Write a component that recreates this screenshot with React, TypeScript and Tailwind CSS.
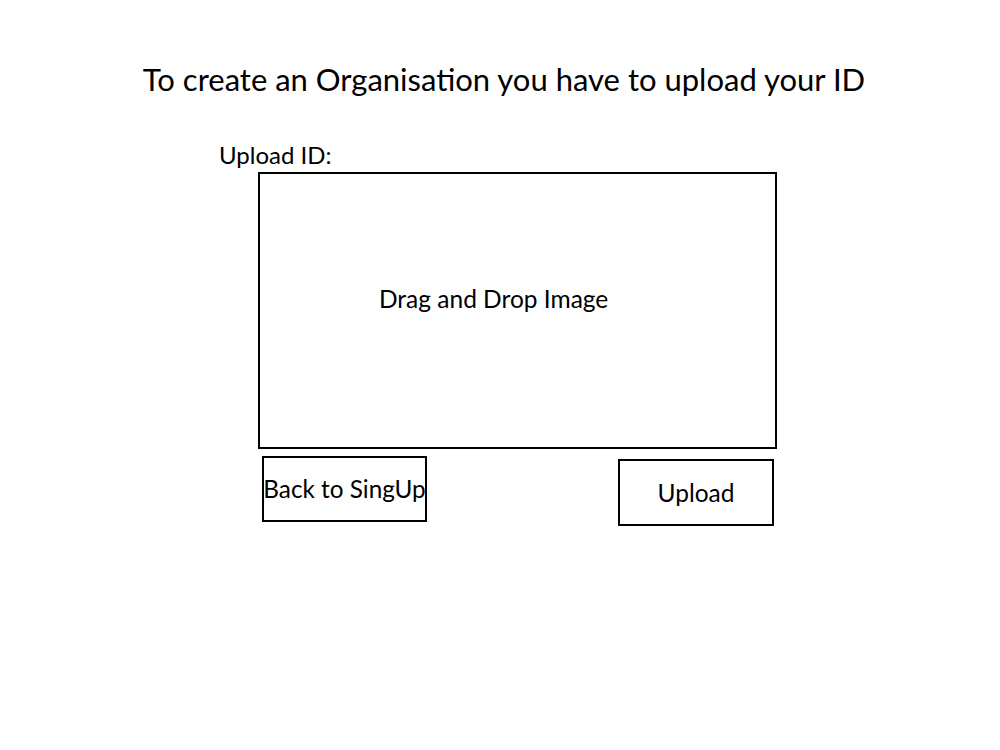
import React from "react";

export default function App() {
  return (
    <div
      className="w-[1000px] h-[750px] bg-white text-black flex flex-col"
      style={{ fontFamily: "Lato, 'Open Sans', sans-serif" }}
    >
      <h1 className="mt-[58px] pl-[8px] text-center text-[31px] leading-[42px] font-normal">
        To create an Organisation you have to upload your ID
      </h1>
      <div className="mt-[39px] ml-[219px] text-[24px] leading-[32px]">Upload ID:</div>
      <div className="ml-[258px] mt-[1px] w-[519px] h-[277px] border-2 border-black flex flex-col">
        <div className="mt-[109px] ml-[119px] text-[24.5px] leading-[32px]">Drag and Drop Image</div>
      </div>
      <div className="flex ml-[262px] mt-[7px] w-[512px] justify-between items-start">
        <button className="w-[165px] h-[66px] border-2 border-black flex items-center justify-center text-[24.3px] leading-[32px] whitespace-nowrap">
          Back to SingUp
        </button>
        <button className="mt-[3px] w-[156px] h-[67px] border-2 border-black flex items-center justify-center text-[24.5px] leading-[32px]">
          Upload
        </button>
      </div>
    </div>
  );
}
